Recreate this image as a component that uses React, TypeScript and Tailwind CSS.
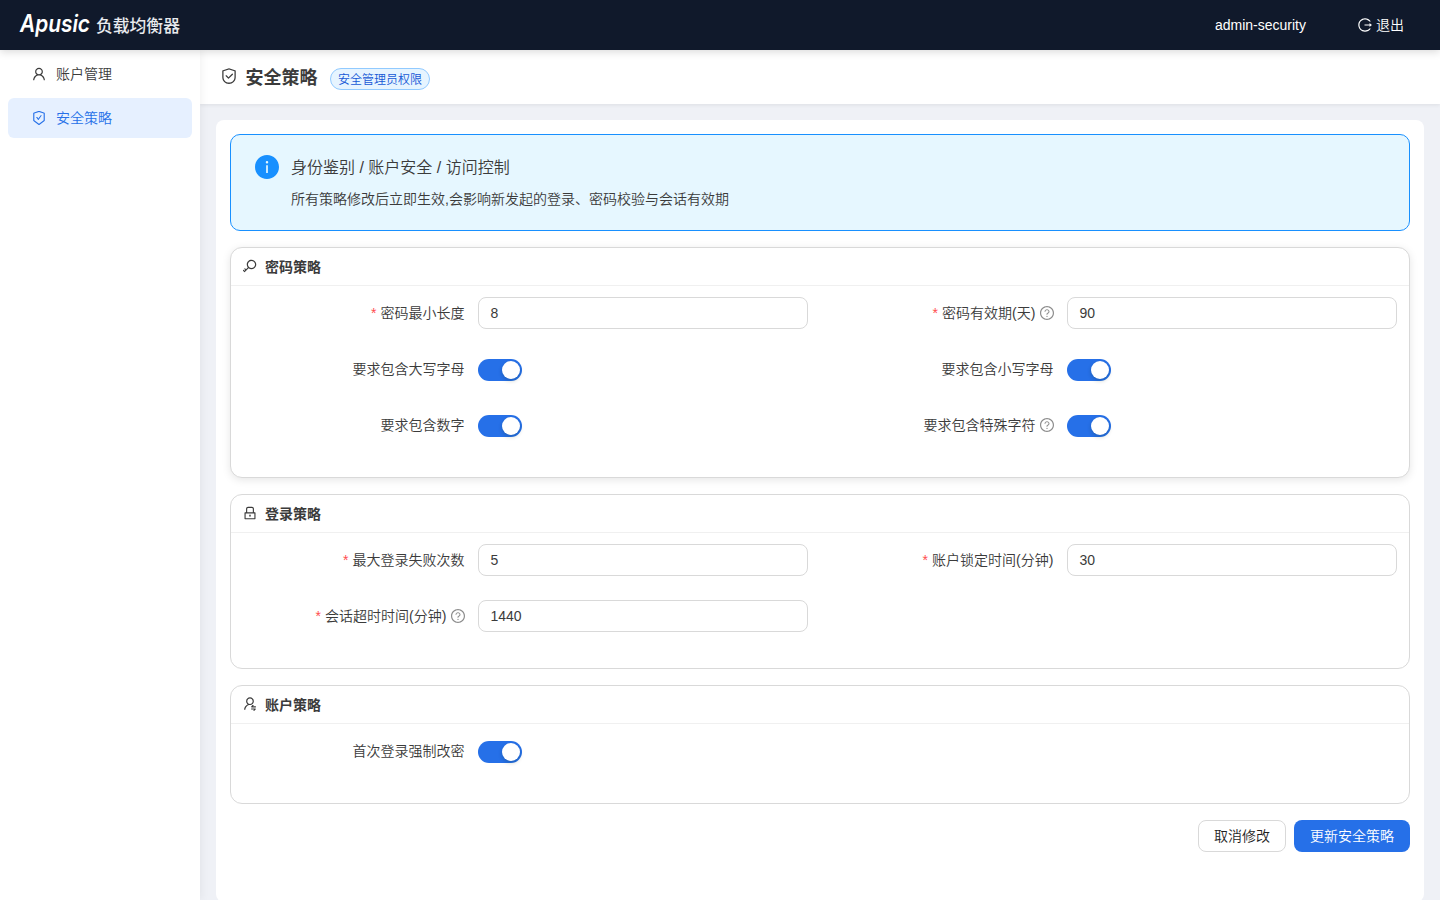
import React, { useState } from 'react';
import {
  AiFillInfoCircle,
  AiOutlineKey,
  AiOutlineLock,
  AiOutlineLogout,
  AiOutlineQuestionCircle,
  AiOutlineSafety,
  AiOutlineSafetyCertificate,
  AiOutlineUser,
  AiOutlineUserSwitch,
} from 'react-icons/ai';

// trims the built-in padding of the icon set
const TIGHT = '64 64 896 896';

interface FieldProps {
  label: string;
  required?: boolean;
  help?: boolean;
  children: React.ReactNode;
}

const Field: React.FC<FieldProps> = ({ label, required, help, children }) => (
  <div className="flex h-8 items-center">
    <div className="flex w-[221.4px] shrink-0 items-center justify-end">
      {required && <span className="mr-1 text-[#ff4d4f]">*</span>}
      <span>{label}</span>
      {help && (
        <AiOutlineQuestionCircle
          viewBox={TIGHT}
          className="-mr-[0.6px] ml-[4.6px] size-[14px] text-black/45"
        />
      )}
    </div>
    <div className="ml-[13.6px] flex flex-1 items-center">{children}</div>
  </div>
);

const NumberInput: React.FC<{ initial: number }> = ({ initial }) => {
  const [value, setValue] = useState(String(initial));

  return (
    <input
      className="h-8 w-full rounded-lg border border-[#d9d9d9] bg-white px-[11.5px] outline-none"
      value={value}
      onChange={(e) => setValue(e.target.value)}
    />
  );
};

const Switch: React.FC = () => {
  const [checked, setChecked] = useState(true);

  return (
    <button
      type="button"
      role="switch"
      aria-checked={checked}
      onClick={() => setChecked(!checked)}
      className={`mt-0.5 flex h-[22px] w-11 items-center rounded-full p-0.5 ${
        checked ? 'justify-end bg-[#2670e8]' : 'justify-start bg-black/25'
      }`}
    >
      <span className="size-[18px] rounded-full bg-white shadow-[0_2px_4px_rgba(0,35,11,0.2)]" />
    </button>
  );
};

interface CardProps {
  icon: React.ReactNode;
  title: string;
  className?: string;
  children: React.ReactNode;
}

const Card: React.FC<CardProps> = ({ icon, title, className = '', children }) => (
  <section className={`mb-4 rounded-xl border border-[#d9d9d9] bg-white ${className}`}>
    <h2 className="flex h-[38px] items-center gap-2 border-b border-[#f0f0f0] px-3 font-semibold">
      <span className="pb-0.5">{icon}</span>
      <span>{title}</span>
    </h2>
    <div className="grid grid-cols-2 gap-6 px-3 pt-[11px]">{children}</div>
  </section>
);

const App: React.FC = () => {
  return (
    <div className="flex h-screen flex-col overflow-hidden bg-[#eff1f6] font-['Liberation_Sans','Noto_Sans_CJK_SC',sans-serif] text-sm leading-[22px] font-[350] text-[#3b3b3b]">
      <header className="relative z-20 flex h-[50px] shrink-0 items-center bg-[#10192b] text-white shadow-[0_2px_8px_rgba(0,0,0,0.15)]">
        <div className="flex items-center pl-4">
          <svg width="76" height="40" viewBox="0 0 76 40" className="overflow-visible">
            <text
              x="4"
              y="27"
              fill="white"
              fontFamily="Inter, sans-serif"
              fontSize="24"
              fontWeight="600"
              fontStyle="italic"
              textLength="70"
              lengthAdjust="spacingAndGlyphs"
            >
              Apusic
            </text>
          </svg>
          <span className="ml-1 pt-[3px] text-[16.8px] font-medium text-[#e8eaee]">负载均衡器</span>
        </div>
        <span className="ml-auto">admin-security</span>
        <button type="button" className="mr-9 ml-[52px] flex items-center gap-1">
          <AiOutlineLogout viewBox={TIGHT} className="size-[14px]" />
          退出
        </button>
      </header>

      <div className="flex min-h-0 flex-1">
        <nav className="relative z-10 w-[200px] shrink-0 bg-white px-2 pt-1 shadow-[2px_0_8px_rgba(0,0,0,0.05)]">
          <a className="flex h-10 items-center gap-2.5 rounded-md pl-6">
            <AiOutlineUser viewBox={TIGHT} className="size-[14px]" />
            账户管理
          </a>
          <a className="mt-1 flex h-10 items-center gap-2.5 rounded-md bg-[#e6f0ff] pl-6 text-[#2670e8]">
            <AiOutlineSafetyCertificate viewBox={TIGHT} className="size-[14px]" />
            安全策略
          </a>
        </nav>

        <main className="flex min-w-0 flex-1 flex-col">
          <div className="flex h-[54px] shrink-0 items-center bg-white pl-5 shadow-[0_1px_4px_rgba(0,0,0,0.08)]">
            <AiOutlineSafety className="mb-0.5 size-[18px]" />
            <h1 className="mt-px ml-[7.5px] text-lg font-semibold">安全策略</h1>
            <span className="mt-1 ml-[12.5px] h-[22px] rounded-full border border-[#91caff] bg-[#e6f4ff] px-[7px] text-xs leading-[22px] text-[#1558d6]">
              安全管理员权限
            </span>
          </div>

          <div className="mx-4 mt-4 h-[782px] shrink-0 rounded-lg bg-white p-[14px]">
            <div className="mb-4 flex h-[97px] gap-3 rounded-[10px] border border-[#1890ff] bg-[#e6f7ff] px-6 pt-5">
              <AiFillInfoCircle viewBox={TIGHT} className="size-6 text-[#1890ff]" />
              <div className="pt-px">
                <div className="text-base leading-6">身份鉴别 / 账户安全 / 访问控制</div>
                <div className="mt-2">所有策略修改后立即生效,会影响新发起的登录、密码校验与会话有效期</div>
              </div>
            </div>

            <Card
              icon={<AiOutlineKey viewBox={TIGHT} className="size-[14px]" />}
              title="密码策略"
              className="h-[231px] shadow-[0_2px_8px_rgba(0,0,0,0.1)]"
            >
              <Field label="密码最小长度" required>
                <NumberInput initial={8} />
              </Field>
              <Field label="密码有效期(天)" required help>
                <NumberInput initial={90} />
              </Field>
              <Field label="要求包含大写字母">
                <Switch />
              </Field>
              <Field label="要求包含小写字母">
                <Switch />
              </Field>
              <Field label="要求包含数字">
                <Switch />
              </Field>
              <Field label="要求包含特殊字符" help>
                <Switch />
              </Field>
            </Card>

            <Card
              icon={<AiOutlineLock viewBox={TIGHT} className="size-[14px]" />}
              title="登录策略"
              className="h-[175px]"
            >
              <Field label="最大登录失败次数" required>
                <NumberInput initial={5} />
              </Field>
              <Field label="账户锁定时间(分钟)" required>
                <NumberInput initial={30} />
              </Field>
              <Field label="会话超时时间(分钟)" required help>
                <NumberInput initial={1440} />
              </Field>
            </Card>

            <Card
              icon={<AiOutlineUserSwitch viewBox={TIGHT} className="size-[14px]" />}
              title="账户策略"
              className="h-[119px]"
            >
              <Field label="首次登录强制改密">
                <Switch />
              </Field>
            </Card>

            <div className="flex justify-end gap-2">
              <button type="button" className="h-8 rounded-lg border border-[#d9d9d9] bg-white px-[15px] text-[#1f1f1f]">
                取消修改
              </button>
              <button type="button" className="h-8 rounded-lg bg-[#2670e8] px-4 text-white">
                更新安全策略
              </button>
            </div>
          </div>
        </main>
      </div>
    </div>
  );
};

export default App;
